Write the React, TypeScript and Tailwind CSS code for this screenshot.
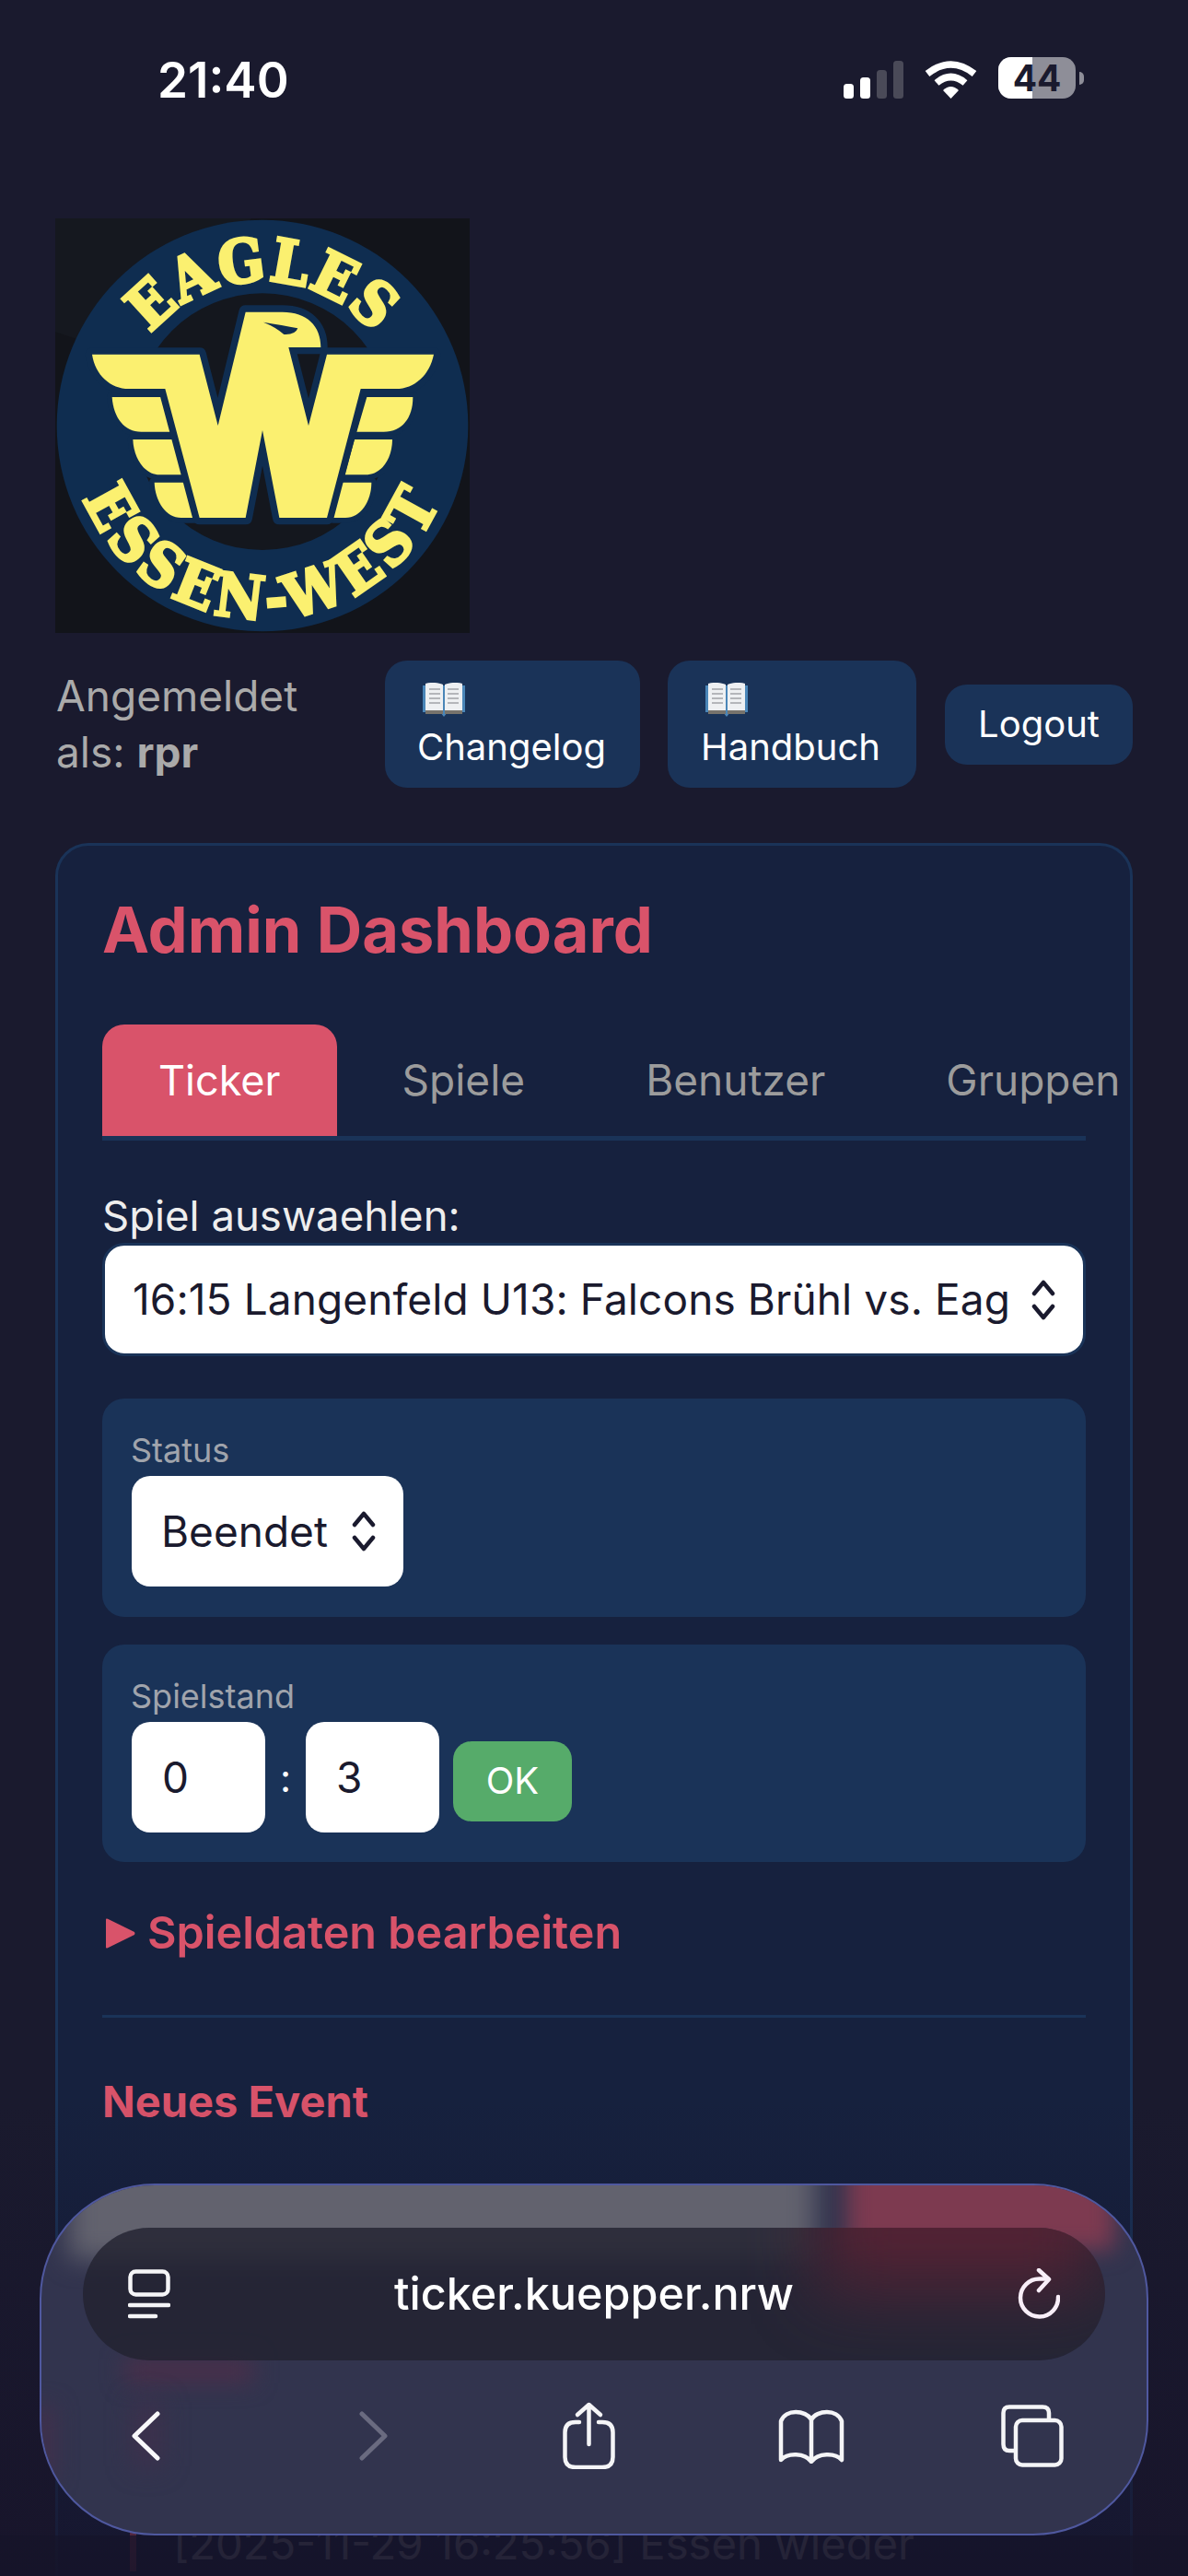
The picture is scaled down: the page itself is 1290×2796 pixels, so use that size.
import React from 'react';

const FONT = 'font-["Inter","Liberation_Sans",sans-serif]';

const EAGLE_BODY =
  'M180 493 L530 493 L590 725 L680 355 L800 355 C880 355 925 400 925 470 L820 470 L885 725 L945 493 L1293 493 C1280 560 1230 605 1170 605 L1055 605 L945 1025 L790 1025 L735 740 L680 1025 L530 1025 L418 605 L300 605 C240 605 190 560 180 493 Z';

const FEATHERS = [
  'M245 632 L415 632 L447 745 L340 745 C285 745 250 700 245 632 Z',
  'M313 770 L450 770 L480 885 L400 885 C350 885 315 830 313 770 Z',
  'M383 910 L487 910 L515 1025 L470 1025 C420 1025 385 970 383 910 Z',
  'M1225 632 L1075 632 L1042 745 L1130 745 C1190 745 1225 700 1225 632 Z',
  'M1158 770 L1035 770 L1003 885 L1070 885 C1125 885 1158 830 1158 770 Z',
  'M1090 910 L995 910 L965 1025 L1005 1025 C1055 1025 1090 970 1090 910 Z',
];

const Logo = () => (
  <svg viewBox="60 50 1350 1350" className="block w-[450px] h-[450px] ml-[60px]">
    <defs>
      <path id="arc-top" d="M 265 725 A 470 470 0 0 1 1205 725" />
      <path id="arc-bottom" d="M 105 725 A 630 630 0 0 0 1365 725" />
    </defs>
    <rect x="60" y="50" width="1350" height="1350" fill="#12141a" />
    <path d="M60 50 L700 50 L300 500 L60 420 Z" fill="#15181f" />
    <circle cx="735" cy="725" r="670" fill="#0f2d50" />
    <circle cx="735" cy="712" r="418" fill="#14171e" />
    {FEATHERS.map((d) => (
      <path key={d} d={d} fill="#fbf070" stroke="#0f2d50" strokeWidth="34" strokeLinejoin="round" paintOrder="stroke" />
    ))}
    <path d={EAGLE_BODY} fill="#fbf070" stroke="#0f2d50" strokeWidth="44" strokeLinejoin="round" paintOrder="stroke" />
    <path d="M738 388 Q800 398 850 408 Q842 430 805 428 Q780 405 738 388 Z" fill="#0f2d50" />
    <text fontFamily="'DejaVu Serif Condensed', 'DejaVu Serif', serif" fontWeight="700" fontSize="196" letterSpacing="4" fill="#fbf070" stroke="#fbf070" strokeWidth="9" textAnchor="middle">
      <textPath href="#arc-top" startOffset="50%">EAGLES</textPath>
    </text>
    <text fontFamily="'DejaVu Serif Condensed', 'DejaVu Serif', serif" fontWeight="700" fontSize="196" letterSpacing="16" fill="#fbf070" stroke="#fbf070" strokeWidth="9" textAnchor="middle">
      <textPath href="#arc-bottom" startOffset="50%">ESSEN-WEST</textPath>
    </text>
  </svg>
);

const BookEmoji = () => (
  <svg viewBox="0 0 46 38" className="block w-[46px] h-[38px]">
    <path d="M0 3 H46 V32 H27 L23 37 L19 32 H0 Z" fill="#4a86b8" />
    <path d="M3 1 C10 -1 17 0 22 2 V33 H3 Z" fill="#eef0f2" />
    <path d="M43 1 C36 -1 29 0 24 2 V33 H43 Z" fill="#eef0f2" />
    <path d="M3 30 H22 V34 H3 Z M24 30 H43 V34 H24 Z" fill="#77736c" />
    <path d="M7 7 H19 M7 12 H19 M7 17 H19 M7 22 H19 M27 7 H39 M27 12 H39 M27 17 H39 M27 22 H39" stroke="#b4b6ba" strokeWidth="2" />
  </svg>
);

const SelectCarets = () => (
  <svg viewBox="0 0 26 46" className="block w-[26px] h-[46px] shrink-0" fill="none" stroke="#1a1a2e" strokeWidth="4.5" strokeLinecap="round" strokeLinejoin="round">
    <path d="M3 16 L13 4 L23 16" />
    <path d="M3 30 L13 42 L23 30" />
  </svg>
);

const StatusBar = () => (
  <div className="h-[237px] pt-[58px] pl-[171px] pr-[113px] flex justify-between items-start">
    <span className="text-[53px] leading-[58px] font-semibold text-white">21:40</span>
    <div className="flex items-start pt-[6px]">
      <svg viewBox="0 0 65 41" className="block w-[65px] h-[41px] mt-[2px]">
        <rect x="0" y="25" width="11" height="16" rx="3.5" fill="#fff" />
        <rect x="18" y="18" width="11" height="23" rx="3.5" fill="#fff" />
        <rect x="36" y="10" width="11" height="31" rx="3.5" fill="#4a4a58" />
        <rect x="54" y="0" width="11" height="41" rx="3.5" fill="#4a4a58" />
      </svg>
      <svg viewBox="0 0 57 41" className="block w-[57px] h-[41px] ml-[23px] mt-[2px]">
        <path d="M3 14 Q28.5 -6 54 14" fill="none" stroke="#fff" strokeWidth="7.5" />
        <path d="M13 24 Q28.5 11 44 24" fill="none" stroke="#fff" strokeWidth="7.5" />
        <path d="M20 32 Q28.5 24 37 32 L28.5 41 Z" fill="#fff" />
      </svg>
      <div className="flex items-center ml-[23px] -mt-[2px]">
        <div className="relative w-[84px] h-[45px] rounded-[14px] overflow-hidden bg-[#8e8e98] flex items-center justify-center">
          <div className="absolute left-0 top-0 bottom-0 w-[37px] bg-white" />
          <span className="relative text-[39px] leading-[45px] font-bold text-[#1a1a2e]">44</span>
        </div>
        <div className="w-[5px] h-[14px] ml-[4px] rounded-r-[5px] bg-[#8e8e98]" />
      </div>
    </div>
  </div>
);

const UserRow = () => (
  <div className="mt-[30px] ml-[61px] flex items-center">
    <div className="w-[357px] text-[46px] leading-[61px] text-[#aaaaaa]">
      Angemeldet<br />als: <b className="font-bold">rpr</b>
    </div>
    <div className="w-[277px] h-[138px] rounded-[24px] bg-[#1a3358] pl-[35px] text-[40px] leading-[52px] text-white">
      <div className="pt-[24px] pl-[6px]"><BookEmoji /></div>
      <div className="mt-[6px]">Changelog</div>
    </div>
    <div className="w-[270px] h-[138px] ml-[30px] rounded-[24px] bg-[#1a3358] pl-[36px] text-[40px] leading-[52px] text-white">
      <div className="pt-[24px] pl-[5px]"><BookEmoji /></div>
      <div className="mt-[6px]">Handbuch</div>
    </div>
    <div className="w-[204px] h-[87px] ml-[31px] rounded-[24px] bg-[#1a3358] flex items-center justify-center text-[40px] text-white">
      Logout
    </div>
  </div>
);

const Tabs = () => (
  <div className="mt-[62px] flex gap-[10px] border-b-[5px] border-[#1a3358] whitespace-nowrap text-[46px] leading-[121px] text-[#9c9c9c]">
    <div className="px-[61px] rounded-t-[24px] bg-[#d9536a] text-[45px] text-white">Ticker</div>
    <div className="px-[61px]">Spiele</div>
    <div className="px-[60px]">Benutzer</div>
    <div className="pl-[61px]">Gruppen</div>
  </div>
);

const GameControls = () => (
  <>
    <div className="mt-[58px] pb-[6px] text-[45.5px] leading-[47px] text-[#eeeeee]">Spiel auswaehlen:</div>
    <div className="h-[123px] border-[3px] border-[#1a3358] rounded-[24px] bg-white pl-[30px] pr-[30px] flex items-center justify-between">
      <span className="whitespace-nowrap text-[46px] tracking-[0.1px] text-[#1a1a2e]">16:15 Langenfeld U13: Falcons Brühl vs. Eag</span>
      <SelectCarets />
    </div>

    <div className="mt-[46px] h-[237px] rounded-[24px] bg-[#1a3358] px-[31px] pt-[32px]">
      <div className="pb-[4px] text-[36px] leading-[48px] text-[#a0a4ac]">Status</div>
      <div className="ml-[1px] w-[295px] h-[120px] rounded-[20px] bg-white pl-[32px] pr-[30px] flex items-center justify-between text-[46px] text-[#1a1a2e]">
        Beendet
        <SelectCarets />
      </div>
    </div>

    <div className="mt-[30px] h-[236px] rounded-[24px] bg-[#1a3358] px-[31px] pt-[32px]">
      <div className="pb-[4px] text-[36px] leading-[48px] text-[#a0a4ac]">Spielstand</div>
      <div className="ml-[1px] flex items-center">
        <div className="w-[145px] h-[120px] rounded-[20px] bg-white pl-[33px] flex items-center text-[46px] text-[#1a1a2e]">0</div>
        <span className="w-[44px] text-center text-[42px] text-white">:</span>
        <div className="w-[145px] h-[120px] rounded-[20px] bg-white pl-[33px] flex items-center text-[46px] text-[#1a1a2e]">3</div>
        <div className="w-[129px] h-[87px] ml-[15px] mt-[8px] rounded-[20px] bg-[#56ab6a] flex items-center justify-center text-[40px] text-white">OK</div>
      </div>
    </div>

    <div className="mt-[47px] h-[60px] flex items-center text-[#d9536a]">
      <svg viewBox="0 0 32 33" className="block w-[32px] h-[33px] ml-[4px]">
        <path d="M0 1.5 Q0 0 2 0.8 L31 15 Q32 16.5 31 18 L2 32.2 Q0 33 0 31.5 Z" fill="#d9536a" />
      </svg>
      <span className="ml-[13px] text-[48.5px] font-semibold whitespace-nowrap">Spieldaten bearbeiten</span>
    </div>
  </>
);

const BarIcons = {
  Sidebar: () => (
    <svg viewBox="0 0 46 54" className="block w-[46px] h-[54px]" fill="none" stroke="#f5f5f7" strokeLinecap="round">
      <rect x="2.5" y="2.5" width="41" height="25" rx="6" strokeWidth="4.5" />
      <path d="M2 39 H44 M2 51 H30" strokeWidth="4.5" />
    </svg>
  ),
  Reload: () => (
    <svg viewBox="0 0 46 56" className="block w-[46px] h-[56px]" fill="none" stroke="#f8eef8" strokeWidth="4.5" strokeLinecap="round" strokeLinejoin="round">
      <path d="M44 31 A20.5 20.5 0 1 1 24 11.5 L33 11.5" />
      <path d="M23 2 L34 12 L23 24" />
    </svg>
  ),
  Back: () => (
    <svg viewBox="0 0 31 54" className="block w-[31px] h-[54px]" fill="none" stroke="#f8f8fa" strokeWidth="5" strokeLinecap="round" strokeLinejoin="round">
      <path d="M28 3 L3 27 L28 51" />
    </svg>
  ),
  Forward: () => (
    <svg viewBox="0 0 31 54" className="block w-[31px] h-[54px]" fill="none" stroke="#6a6b80" strokeWidth="5" strokeLinecap="round" strokeLinejoin="round">
      <path d="M3 3 L28 27 L3 51" />
    </svg>
  ),
  Share: () => (
    <svg viewBox="0 0 57 73" className="block w-[57px] h-[73px]" fill="none" stroke="#f5f5f7" strokeWidth="4.5" strokeLinecap="round" strokeLinejoin="round">
      <path d="M18 22 H14 Q2.5 22 2.5 33 V60 Q2.5 71 14 71 H43 Q54.5 71 54.5 60 V33 Q54.5 22 43 22 H39" />
      <path d="M28.5 46 V3 M16 14 L28.5 3 L41 14" />
    </svg>
  ),
  Book: () => (
    <svg viewBox="0 0 72 60" className="block w-[72px] h-[60px]" fill="none" stroke="#f5f5f7" strokeWidth="4.5" strokeLinecap="round" strokeLinejoin="round">
      <path d="M36 12 C30 2 8 0 3 14 V56 C10 48 29 48 36 58 C43 48 62 48 69 56 V14 C64 0 42 2 36 12 Z" />
      <path d="M36 12 V57" />
    </svg>
  ),
  Tabs: () => (
    <svg viewBox="0 0 68 68" className="block w-[68px] h-[68px]" fill="none" stroke="#f5f5f7" strokeWidth="4.5" strokeLinejoin="round">
      <path d="M52 17 V9 Q52 2.5 45 2.5 H9 Q2.5 2.5 2.5 9 V43 Q2.5 50 9 50 H16" />
      <rect x="16" y="17" width="49.5" height="48.5" rx="7" />
    </svg>
  ),
};

const SafariBar = () => (
  <div className="absolute left-[43px] top-[2370px] w-[1204px] h-[382px] rounded-[125px] overflow-hidden border-2 border-[#4f589f] bg-[#32344e]">
    {/* blurred page content behind the glass */}
    <div className="absolute left-[30px] -top-[50px] w-[810px] h-[130px] bg-[#62626e] blur-[14px]" />
    <div className="absolute left-[875px] -top-[40px] w-[290px] h-[110px] bg-[#7d3a50] blur-[12px]" />
    <div className="absolute left-[90px] top-[188px] w-[140px] h-[26px] bg-[#4a2f4a] blur-[12px]" />
    <div className="absolute -left-[10px] top-[240px] w-[24px] h-[80px] bg-[#42304c] blur-[12px]" />
    <div className="absolute left-[100px] top-[235px] w-[30px] h-[70px] bg-[#3e304c] blur-[14px]" />

    <div className="relative ml-[45px] mt-[46px] w-[1110px] h-[144px] rounded-[72px] overflow-hidden bg-[#222230]/80 px-[49px] flex items-center justify-between">
      <div className="absolute right-[10px] -top-[60px] w-[300px] h-[130px] bg-[#5a2233]/80 blur-[36px]" />
      <div className="relative"><BarIcons.Sidebar /></div>
      <span className="relative text-[48.5px] font-medium text-white">ticker.kuepper.nrw</span>
      <div className="relative"><BarIcons.Reload /></div>
    </div>
    <div className="relative mt-[45px] flex items-center">
      <div className="ml-[98px]"><BarIcons.Back /></div>
      <div className="ml-[216px]"><BarIcons.Forward /></div>
      <div className="ml-[190px]"><BarIcons.Share /></div>
      <div className="ml-[177px]"><BarIcons.Book /></div>
      <div className="ml-[170px]"><BarIcons.Tabs /></div>
    </div>
  </div>
);

export default function App() {
  return (
    <div className={`relative w-[1290px] h-[2796px] overflow-hidden bg-[#1a1a2e] ${FONT}`}>
      <StatusBar />
      <Logo />
      <UserRow />

      <div className="ml-[60px] mt-[60px] w-[1170px] border-[3px] border-[#1a3358] rounded-[36px] bg-[#16213e] px-[48px] pt-[52px] pb-[80px]">
        <h1 className="text-[68.5px] leading-[80px] font-bold text-[#d9536a] whitespace-nowrap">Admin Dashboard</h1>
        <Tabs />
        <GameControls />

        <div className="mt-[59px] h-[3px] bg-[#1a3358]" />
        <h3 className="mt-[61px] text-[47px] leading-[60px] font-bold text-[#d9536a]">Neues Event</h3>

        <div className="mt-[76px] flex gap-[40px]">
          <div className="flex-1 h-[125px] rounded-[20px] bg-white" />
          <div className="w-[260px] h-[125px] rounded-[20px] bg-[#d9536a]" />
        </div>

        <div className="mt-[219px] ml-[30px] border-l-[7px] border-[#d9536a] pl-[40px] text-[47.2px] leading-[60px] text-[#eeeeee] whitespace-nowrap">
          [2025-11-29 16:25:56] Essen wieder
        </div>
      </div>

      {/* iOS dims the page towards the bottom edge */}
      <div className="absolute left-0 right-0 bottom-0 h-[520px] bg-gradient-to-b from-transparent to-[#17132a]/75" />
      <div className="absolute left-0 right-0 top-[2752px] bottom-0 bg-[#15142a]/75" />
      <SafariBar />
    </div>
  );
}
